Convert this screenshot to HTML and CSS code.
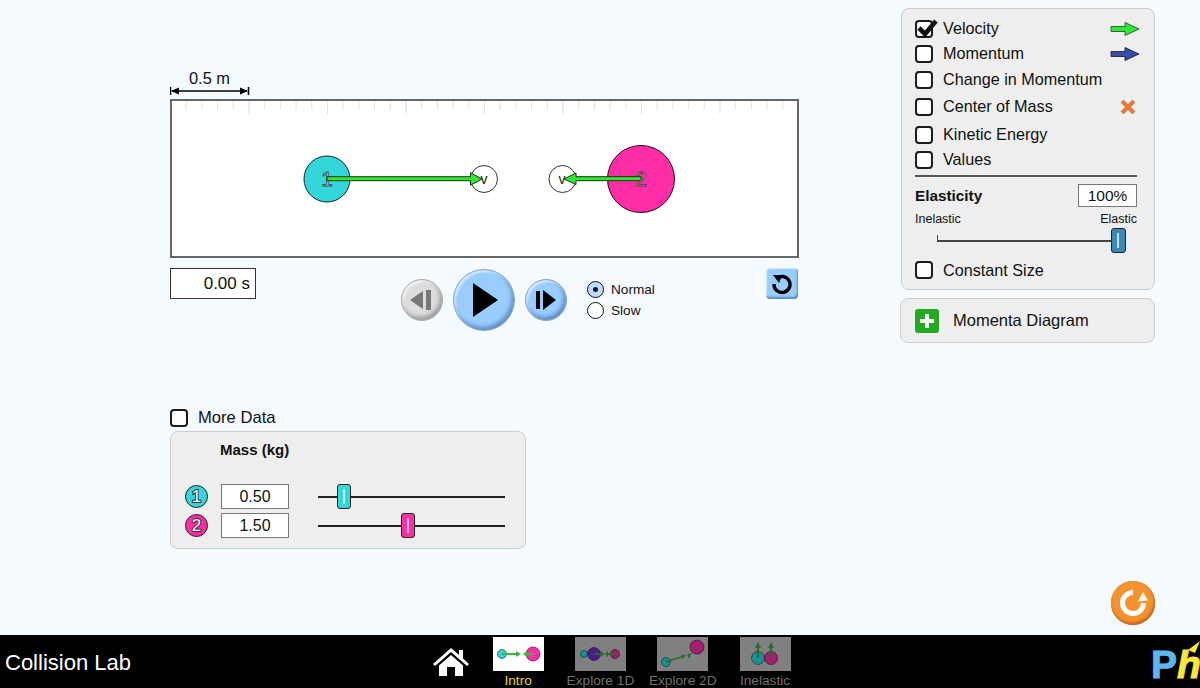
FILE: index.html
```html
<!DOCTYPE html>
<html lang="en">
<head>
  <meta charset="UTF-8" />
  <title>Collision Lab</title>
  <link rel="stylesheet" href="styles.css">
</head>
<body>
  <div class="sim">
    <div class="left">
      <div class="scale">
        <span class="scale-label">0.5 m</span>
        <svg class="scale-arrow" width="80" height="10" viewBox="0 0 80 10">
          <path d="M0.5 1V9M78.5 1V9M2 5H77" stroke="#000" stroke-width="1.6" fill="none"/>
          <path d="M1 5L9 1.5V8.5ZM78 5L70 1.5V8.5Z" fill="#000"/>
        </svg>
      </div>

      <div class="stage">
        <svg width="625" height="155" viewBox="172 101 625 155">
          <defs>
            <pattern id="ticks" x="170" y="100" width="15.7" height="10" patternUnits="userSpaceOnUse">
              <rect width="1" height="10" fill="#e2e2e2"/>
            </pattern>
            <pattern id="long-ticks" x="170" y="100" width="78.5" height="14" patternUnits="userSpaceOnUse">
              <rect width="1" height="14" fill="#e2e2e2"/>
            </pattern>
          </defs>
          <rect x="172" y="101" width="625" height="9" fill="url(#ticks)"/>
          <rect x="172" y="101" width="625" height="13" fill="url(#long-ticks)"/>

          <circle cx="484" cy="179" r="13.5" fill="#fff" stroke="#333"/>
          <text x="484" y="184" class="v-label">v</text>
          <circle cx="562.5" cy="179" r="13.5" fill="#fff" stroke="#333"/>
          <text x="562" y="184" class="v-label">v</text>

          <circle cx="327" cy="179" r="23" fill="#33d6d9" stroke="#123"/>
          <circle cx="641" cy="179" r="33.5" fill="#ff2da6" stroke="#301"/>
          <text x="327" y="186" class="ball-num">1</text>
          <path d="M327 176.7H470.5V172.7L482 179L470.5 185.2V180.7H327Z" class="arrow"/>
          <path d="M641 176.7H576V173L564 179L576 184.5V180.7H641Z" class="arrow"/>
          <text x="641" y="186" class="ball-num">2</text>
        </svg>
      </div>

      <div class="transport-row">
        <div class="clock">0.00 s</div>
        <div class="transport">
          <div class="round-btn step-btn disabled">
            <svg width="26" height="24" viewBox="0 0 26 24"><path d="M1 12L14 3V21ZM17 2H22V22H17Z" fill="#777"/></svg>
          </div>
          <div class="round-btn play-btn">
            <svg width="28" height="36" viewBox="0 0 28 36"><path d="M1 1L26 18L1 35Z" fill="#000"/></svg>
          </div>
          <div class="round-btn step-btn">
            <svg width="22" height="24" viewBox="0 0 22 24"><path d="M1 3H5V21H1ZM8 2L21 12L8 22Z" fill="#000"/></svg>
          </div>
        </div>
        <div class="speed">
          <div class="radio-row"><span class="radio selected"></span>Normal</div>
          <div class="radio-row"><span class="radio"></span>Slow</div>
        </div>
        <div class="restart-btn">
          <svg width="22" height="22" viewBox="0 0 22 22">
            <path d="M6 5.2A8 8 0 1 1 3 11" fill="none" stroke="#000" stroke-width="3.4"/>
            <path d="M2 2L11 2.5L8 10Z" fill="#000"/>
          </svg>
        </div>
      </div>

      <label class="more-data"><span class="checkbox"></span>More Data</label>

      <div class="mass-panel">
        <div class="mass-title">Mass (kg)</div>
        <div class="mass-row">
          <span class="badge badge-1">1</span>
          <div class="value-box">0.50</div>
          <div class="h-slider"><span class="thumb thumb-1"></span></div>
        </div>
        <div class="mass-row">
          <span class="badge badge-2">2</span>
          <div class="value-box">1.50</div>
          <div class="h-slider"><span class="thumb thumb-2"></span></div>
        </div>
      </div>
    </div>

    <div class="right">
      <div class="panel">
        <div class="options">
          <div class="row">
            <span class="checkbox">
              <svg class="check" width="24" height="22" viewBox="0 0 24 22"><path d="M4 11L10 17L21 4" fill="none" stroke="#111" stroke-width="4.6"/></svg>
            </span>
            Velocity
            <svg class="legend" width="30" height="16" viewBox="0 0 30 16"><path d="M1 5.5H15V1.5L29 8L15 14.5V10.5H1Z" fill="#33e633" stroke="#143" stroke-width=".8"/></svg>
          </div>
          <div class="row">
            <span class="checkbox"></span>
            Momentum
            <svg class="legend" width="30" height="16" viewBox="0 0 30 16"><path d="M1 5.5H15V1.5L29 8L15 14.5V10.5H1Z" fill="#3a4aa8" stroke="#113" stroke-width=".8"/></svg>
          </div>
          <div class="row"><span class="checkbox"></span>Change in Momentum</div>
          <div class="row">
            <span class="checkbox"></span>
            Center of Mass
            <svg class="legend legend-x" width="16" height="16" viewBox="0 0 16 16"><path d="M3.5 1L8 5.5L12.5 1L15 3.5L10.5 8L15 12.5L12.5 15L8 10.5L3.5 15L1 12.5L5.5 8L1 3.5Z" fill="#ee7733" stroke="#a86a3a" stroke-width=".6"/></svg>
          </div>
          <div class="row"><span class="checkbox"></span>Kinetic Energy</div>
          <div class="row"><span class="checkbox"></span>Values</div>
        </div>
        <div class="separator"></div>
        <div class="elasticity-head">
          <b>Elasticity</b>
          <div class="percent-box">100%</div>
        </div>
        <div class="elasticity-labels"><span>Inelastic</span><span>Elastic</span></div>
        <div class="elastic-slider"><span class="thumb thumb-elastic"></span></div>
        <div class="row constant-size"><span class="checkbox"></span>Constant Size</div>
      </div>

      <div class="diagram-panel">
        <span class="plus-btn">
          <svg width="16" height="16" viewBox="0 0 16 16"><path d="M6 1H10V6H15V10H10V15H6V10H1V6H6Z" fill="#fff"/></svg>
        </span>
        Momenta Diagram
      </div>

      <div class="reset-all">
        <svg width="30" height="30" viewBox="0 0 30 30">
          <path d="M15 4.5A10.5 10.5 0 1 0 25.5 15" fill="none" stroke="#fff" stroke-width="5"/>
          <path d="M25 4L30 12.5L20 13.5Z" fill="#fff"/>
        </svg>
      </div>
    </div>
  </div>

  <nav class="navbar">
    <div class="title">Collision Lab</div>
    <svg class="home" width="36" height="28" viewBox="0 0 36 28">
      <path d="M18 0L26 7V2H30V10.5L36 16L34 18L18 4L2 18L0 16Z" fill="#fff"/>
      <path d="M18 7L30 17.5V28H22V19H14V28H6V17.5Z" fill="#fff"/>
    </svg>
    <div class="tabs">
      <div class="tab active">
        <svg class="tab-icon" width="51" height="34" viewBox="0 0 51 34">
          <rect width="51" height="34" fill="#fff"/>
          <circle cx="9" cy="17" r="4.5" fill="#33d6d9" stroke="#123" stroke-width=".6"/>
          <circle cx="40" cy="17" r="7" fill="#ff2da6" stroke="#301" stroke-width=".6"/>
          <path d="M9 16H23V14L28 17L23 20V18H9ZM40 16H34V14L30 17L34 20V18H40Z" fill="#3db83d"/>
        </svg>
        <span>Intro</span>
      </div>
      <div class="tab">
        <svg class="tab-icon" width="51" height="34" viewBox="0 0 51 34">
          <rect width="51" height="34" fill="#808080"/>
          <circle cx="9" cy="17" r="3.5" fill="#1a8f92" stroke="#123" stroke-width=".6"/>
          <circle cx="19" cy="17" r="6.5" fill="#4d1a8a" stroke="#213" stroke-width=".6"/>
          <circle cx="40" cy="17" r="4.5" fill="#99226a" stroke="#301" stroke-width=".6"/>
          <path d="M19 16H26V14L29.500 17L26 20V18H19ZM40 16H33V14L29.500 17L33 20V18H40Z" fill="#276e27"/>
        </svg>
        <span>Explore 1D</span>
      </div>
      <div class="tab">
        <svg class="tab-icon" width="51" height="34" viewBox="0 0 51 34">
          <rect width="51" height="34" fill="#808080"/>
          <circle cx="9" cy="25" r="4.5" fill="#1a8f92" stroke="#123" stroke-width=".6"/>
          <circle cx="40" cy="10" r="7" fill="#a31f72" stroke="#301" stroke-width=".6"/>
          <path d="M9 25L26 19.500" stroke="#276e27" stroke-width="1.8"/>
          <path d="M29 18.500L24 17.500L25.500 22ZM32 22L35 16L30 17.500Z" fill="#276e27"/>
        </svg>
        <span>Explore 2D</span>
      </div>
      <div class="tab">
        <svg class="tab-icon" width="51" height="34" viewBox="0 0 51 34">
          <rect width="51" height="34" fill="#808080"/>
          <circle cx="18" cy="21" r="6.5" fill="#1a8f92" stroke="#123" stroke-width=".6"/>
          <circle cx="31" cy="21" r="6.5" fill="#a31f72" stroke="#301" stroke-width=".6"/>
          <path d="M18 21V10M31 21V10" stroke="#276e27" stroke-width="1.8"/>
          <path d="M18 5L15 11H21ZM31 5L28 11H34Z" fill="#276e27"/>
        </svg>
        <span>Inelastic</span>
      </div>
    </div>
    <div class="logo">
      <span class="logo-p">P</span><span class="logo-h">h</span>
      <svg class="logo-flame" width="12" height="12" viewBox="0 0 12 12"><path d="M0 9L12 0L7 12Z" fill="#fbe63a"/></svg>
    </div>
  </nav>
</body>
</html>
```

FILE: styles.css
```css
html, body {
  margin: 0;
  height: 100%;
}
body {
  width: 1200px;
  height: 688px;
  overflow: hidden;
  display: flex;
  flex-direction: column;
  background: #f5faff;
  font-family: "Liberation Sans", Arial, sans-serif;
  color: #111;
}
.sim {
  flex: 0 0 635px;
  display: flex;
}
.left {
  width: 629px;
  margin-left: 170px;
}
.right {
  width: 255px;
  margin-left: 101px;
  padding-top: 8px;
  display: flex;
  flex-direction: column;
  box-sizing: border-box;
}

/* scale bar */
.scale {
  width: 79px;
  height: 99px;
  box-sizing: border-box;
  padding-top: 69px;
  display: flex;
  flex-direction: column;
  align-items: center;
}
.scale-label {
  font-size: 16.4px;
  line-height: 19px;
}
.scale-arrow {
  margin-top: -2px;
}

/* play area */
.stage {
  width: 629px;
  height: 159px;
  box-sizing: border-box;
  border: 2px solid #666;
  background: #fff;
}
.stage svg {
  display: block;
}
.arrow {
  fill: #33e633;
  stroke: #0b3b0b;
  stroke-width: 1;
}
.ball-num {
  font-size: 21px;
  text-anchor: middle;
  fill: rgba(255, 255, 255, 0.35);
  stroke: #444;
  stroke-width: 0.8;
}
.v-label {
  font-size: 14px;
  text-anchor: middle;
  fill: #222;
}

/* time controls */
.transport-row {
  display: flex;
  align-items: flex-start;
  margin-top: 10px;
  height: 63px;
}
.clock {
  width: 86px;
  height: 31px;
  box-sizing: border-box;
  border: 1px solid #333;
  background: #fff;
  font-size: 17px;
  line-height: 30px;
  text-align: right;
  padding-right: 5px;
}
.transport {
  display: flex;
  align-items: center;
  gap: 10px;
  margin-left: 145px;
  margin-top: 1px;
}
.round-btn {
  display: flex;
  align-items: center;
  justify-content: center;
  box-sizing: border-box;
  border-radius: 50%;
  border: 1px solid #8fa6bd;
  background: #99ccff;
  box-shadow: inset -2px -3px 4px rgba(0, 40, 90, 0.4), inset 2px 2px 2px rgba(255, 255, 255, 0.6);
}
.step-btn {
  width: 42px;
  height: 42px;
}
.play-btn {
  width: 62px;
  height: 62px;
  padding-left: 3px;
}
.disabled {
  background: #dcdcdc;
  border-color: #aaa;
  box-shadow: inset -2px -3px 4px rgba(0, 0, 0, 0.3), inset 2px 2px 2px rgba(255, 255, 255, 0.6);
}
.speed {
  margin-left: 20px;
  margin-top: 11px;
  font-size: 13.6px;
}
.radio-row {
  display: flex;
  align-items: center;
  gap: 7px;
  height: 21px;
}
.radio {
  position: relative;
  width: 17px;
  height: 17px;
  box-sizing: border-box;
  border: 1px solid #111;
  border-radius: 50%;
  background: #fff;
}
.radio.selected {
  background: #bfdcff;
}
.radio.selected::after {
  content: "";
  position: absolute;
  left: 5px;
  top: 5px;
  width: 5px;
  height: 5px;
  border-radius: 50%;
  background: #111;
}
.restart-btn {
  display: flex;
  align-items: center;
  justify-content: center;
  margin-left: auto;
  margin-right: 1px;
  width: 32px;
  height: 31px;
  border-radius: 4px;
  background: #99ccff;
  box-shadow: inset -1px -2px 2px rgba(0, 40, 90, 0.4), inset 1px 1px 1px rgba(255, 255, 255, 0.6);
}

/* checkboxes */
.checkbox {
  position: relative;
  flex: none;
  width: 18px;
  height: 18px;
  box-sizing: border-box;
  border: 2px solid #1c1c1c;
  border-radius: 4px;
  background: #fff;
}
.check {
  position: absolute;
  left: -2px;
  top: -5px;
}

/* mass controls */
.more-data {
  display: flex;
  align-items: center;
  gap: 10px;
  margin-top: 76px;
  height: 22px;
  font-size: 16.6px;
}
.mass-panel {
  width: 356px;
  height: 118px;
  margin-top: 2px;
  box-sizing: border-box;
  border: 1px solid #ccc;
  border-radius: 8px;
  background: #eeeeee;
  padding: 9px 0 0 14px;
}
.mass-title {
  margin-left: 35px;
  height: 41px;
  font-size: 15px;
  line-height: 18px;
  font-weight: bold;
}
.mass-row {
  display: flex;
  align-items: center;
  height: 29px;
}
.badge {
  width: 23px;
  height: 23px;
  box-sizing: border-box;
  border: 1px solid #222;
  border-radius: 50%;
  font-size: 17px;
  line-height: 21px;
  text-align: center;
  color: #fff;
  -webkit-text-stroke: 2px #333;
  paint-order: stroke fill;
}
.badge-1 {
  background: #33d6d9;
}
.badge-2 {
  background: #ff2da6;
}
.value-box {
  width: 68px;
  height: 25px;
  margin-left: 13px;
  box-sizing: border-box;
  border: 1px solid #777;
  background: #fff;
  font-size: 16px;
  line-height: 23px;
  text-align: center;
}
.h-slider {
  position: relative;
  width: 187px;
  height: 2px;
  margin-left: 29px;
  background: #222;
}
.thumb {
  position: absolute;
  width: 14px;
  height: 25px;
  top: -12px;
  box-sizing: border-box;
  border: 1px solid #222;
  border-radius: 3px;
}
.thumb::after {
  content: "";
  position: absolute;
  left: 5px;
  top: 4px;
  bottom: 4px;
  width: 2px;
  background: rgba(255, 255, 255, 0.7);
}
.thumb-1 {
  left: 19px;
  background: #33d6d9;
}
.thumb-2 {
  left: 83px;
  background: #ff2da6;
}

/* right side panels */
.panel {
  width: 254px;
  height: 282px;
  margin-left: 1px;
  box-sizing: border-box;
  border: 1px solid #ccc;
  border-radius: 8px;
  background: #eeeeee;
  padding: 7px 17px 0 13px;
}
.options {
  display: grid;
  grid-template-rows: 25px 25px 27px 27px 29px 21px;
}
.row {
  display: flex;
  align-items: center;
  gap: 10px;
  font-size: 16.2px;
}
.legend {
  margin-left: auto;
  margin-right: -3px;
}
.legend-x {
  margin-right: 1px;
}
.separator {
  height: 2px;
  margin-top: 5px;
  background: #555;
}
.elasticity-head {
  display: flex;
  align-items: center;
  justify-content: space-between;
  margin-top: 7px;
  font-size: 15.3px;
}
.percent-box {
  width: 59px;
  height: 23px;
  box-sizing: border-box;
  border: 1px solid #777;
  background: #fff;
  font-size: 15.5px;
  line-height: 21px;
  text-align: center;
}
.elasticity-labels {
  display: flex;
  justify-content: space-between;
  margin-top: 4px;
  font-size: 12.5px;
  line-height: 16px;
}
.elastic-slider {
  position: relative;
  width: 181px;
  height: 2px;
  margin: 13px 0 0 22px;
  background: #444;
}
.elastic-slider::before {
  content: "";
  position: absolute;
  left: 0;
  top: -5px;
  width: 1px;
  height: 6px;
  background: #444;
}
.thumb-elastic {
  left: 174px;
  width: 15px;
  background: #3a8ab8;
}
.constant-size {
  margin-top: 17px;
  height: 22px;
}
.diagram-panel {
  display: flex;
  align-items: center;
  gap: 14px;
  width: 255px;
  height: 45px;
  margin-top: 8px;
  box-sizing: border-box;
  border: 1px solid #ccc;
  border-radius: 8px;
  background: #eeeeee;
  padding-left: 14px;
  font-size: 16.5px;
}
.plus-btn {
  display: flex;
  align-items: center;
  justify-content: center;
  width: 24px;
  height: 24px;
  border-radius: 3px;
  background: #22aa22;
}
.reset-all {
  display: flex;
  align-items: center;
  justify-content: center;
  align-self: flex-end;
  width: 44px;
  height: 44px;
  margin-top: auto;
  margin-bottom: 10px;
  box-sizing: border-box;
  border-radius: 50%;
  background: #f7932e;
  box-shadow: inset -1px -2px 3px rgba(120, 50, 0, 0.5), 0 0 1px #a86;
}

/* bottom bar */
.navbar {
  flex: 1;
  display: flex;
  align-items: flex-start;
  background: #000;
  overflow: hidden;
}
.title {
  width: 428px;
  padding-left: 5px;
  margin-top: 13px;
  color: #fff;
  font-size: 22px;
  line-height: 30px;
}
.home {
  margin-top: 13px;
}
.tabs {
  display: flex;
  margin-left: 8px;
  margin-top: 2px;
}
.tab {
  width: 82.3px;
  display: flex;
  flex-direction: column;
  align-items: center;
  color: #707070;
  font-size: 13.7px;
  line-height: 17px;
}
.tab span {
  margin-top: 1px;
}
.tab.active {
  color: #e6d52c;
}
.tab-icon {
  display: block;
}
.logo {
  position: relative;
  margin-left: auto;
  margin-top: 10px;
  width: 49px;
  font-size: 39px;
  font-weight: bold;
  line-height: 40px;
  white-space: nowrap;
  -webkit-text-stroke: 1px;
}
.logo-p {
  color: #5bb8ee;
}
.logo-h {
  color: #fbe63a;
  font-style: italic;
}
.logo-flame {
  position: absolute;
  right: 0;
  top: -4px;
}
```
